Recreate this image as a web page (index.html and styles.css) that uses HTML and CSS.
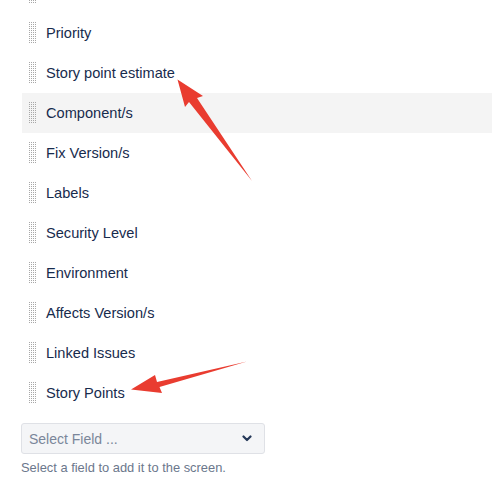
FILE: index.html
```html
<!DOCTYPE html>
<html>
<head>
<meta charset="utf-8">
<link rel="stylesheet" href="styles.css">
</head>
<body>
<div class="page">
  <ul class="fields">
    <li class="row"><span class="handle"></span></li>
    <li class="row"><span class="handle"></span><span class="label">Priority</span></li>
    <li class="row"><span class="handle"></span><span class="label">Story point estimate</span></li>
    <li class="row hover"><span class="handle"></span><span class="label">Component/s</span></li>
    <li class="row"><span class="handle"></span><span class="label">Fix Version/s</span></li>
    <li class="row"><span class="handle"></span><span class="label">Labels</span></li>
    <li class="row"><span class="handle"></span><span class="label">Security Level</span></li>
    <li class="row"><span class="handle"></span><span class="label">Environment</span></li>
    <li class="row"><span class="handle"></span><span class="label">Affects Version/s</span></li>
    <li class="row"><span class="handle"></span><span class="label">Linked Issues</span></li>
    <li class="row"><span class="handle"></span><span class="label">Story Points</span></li>
  </ul>
  <div class="add">
    <div class="select">
      <span class="placeholder">Select Field ...</span>
      <svg class="chev" width="10" height="7" viewBox="0 0 10 7"><path d="M1.5 1.5 L5 5 L8.5 1.5" fill="none" stroke="#253858" stroke-width="2.2" stroke-linecap="round" stroke-linejoin="round"/></svg>
    </div>
    <p class="help">Select a field to add it to the screen.</p>
  </div>
  <svg class="arrows" width="492" height="480" viewBox="0 0 492 480">
    <polygon points="177.5,79.5 203,96 197,98 252,181 189,102 185,107" fill="#e93c30"/>
    <polygon points="131,389.5 155,375 157,382 247,361.5 159.5,387 162,393" fill="#e93c30"/>
  </svg>
</div>
</body>
</html>
```
FILE: styles.css
```css
html, body {
  margin: 0;
  padding: 0;
  background: #ffffff;
}
.page {
  position: relative;
  width: 492px;
  height: 480px;
  overflow: hidden;
  font-family: "Liberation Sans", Arial, sans-serif;
}
.fields {
  list-style: none;
  margin: -27px 0 0 22px;
  padding: 0;
}
.row {
  height: 40px;
  display: flex;
  align-items: center;
  padding-left: 7px;
  gap: 9px;
}
.row.hover {
  background: #f4f4f4;
}
.handle {
  width: 8px;
  height: 22px;
  flex: none;
  background-image: conic-gradient(at 1px 1px, transparent 75%, #a8a8a8 0);
  background-size: 2px 2px;
}
.label {
  font-size: 14.6px;
  color: #172b4d;
}
.add {
  margin: 10px 0 0 21px;
}
.select {
  width: 223px;
  height: 29px;
  border: 1px solid #dfe1e6;
  border-radius: 3px;
  background: #f4f5f7;
  display: flex;
  align-items: center;
  justify-content: space-between;
  padding: 0 12px 0 7px;
}
.placeholder {
  font-size: 14px;
  color: #7a869a;
}
.chev {
  display: block;
}
.help {
  margin: 6px 0 0 0;
  font-size: 12.9px;
  color: #6b778c;
}
.arrows {
  position: absolute;
  left: 0;
  top: 0;
  pointer-events: none;
}
```
